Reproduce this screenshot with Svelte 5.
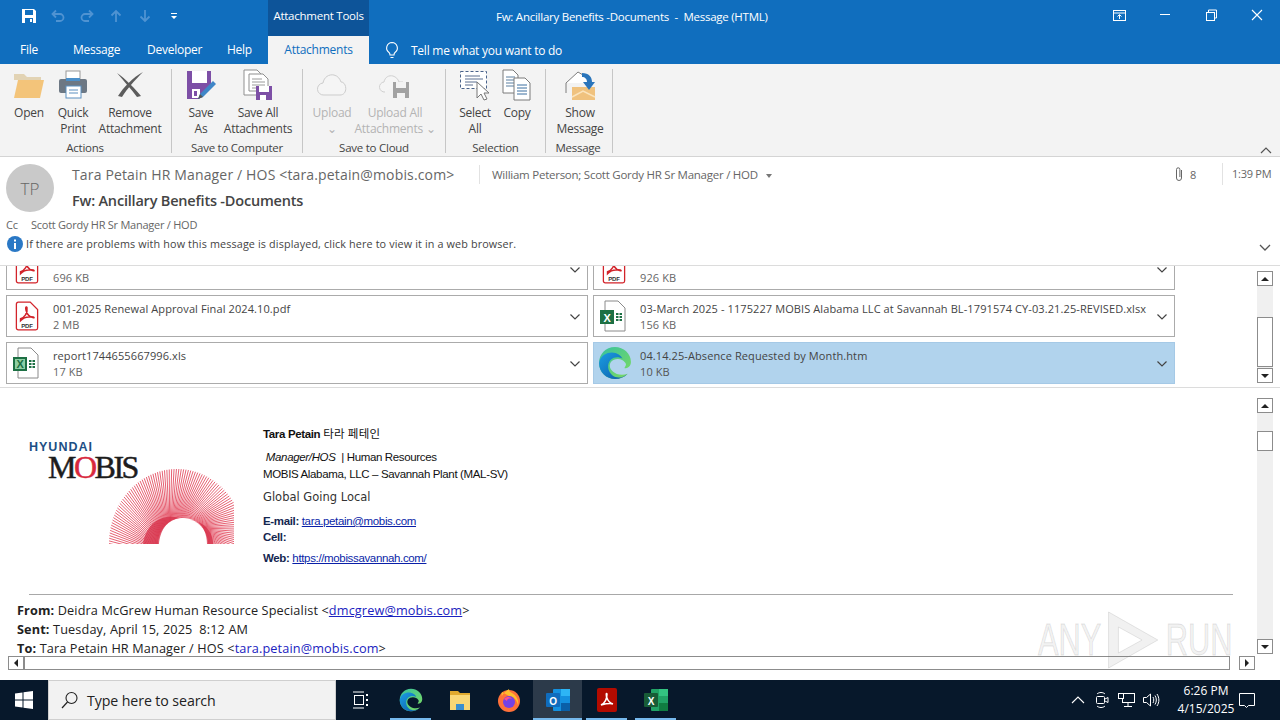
<script>
  const groups = [
    { caption: 'Actions', width: 172, pad: 7, items: [
      { icon: 'open', w: 44, label: ['Open'] },
      { icon: 'print', w: 44, label: ['Quick', 'Print'] },
      { icon: 'remove', w: 70, label: ['Remove', 'Attachment'] },
    ]},
    { caption: 'Save to Computer', width: 131, pad: 8, items: [
      { icon: 'saveas', w: 42, label: ['Save', 'As'] },
      { icon: 'saveall', w: 72, label: ['Save All', 'Attachments'] },
    ]},
    { caption: 'Save to Cloud', width: 143, pad: 8, items: [
      { icon: 'upload', w: 42, label: ['Upload', '⌄'], off: true },
      { icon: 'uploadall', w: 84, label: ['Upload All', 'Attachments ⌄'], off: true },
    ]},
    { caption: 'Selection', width: 100, pad: 8, items: [
      { icon: 'select', w: 42, label: ['Select', 'All'] },
      { icon: 'copy', w: 42, label: ['Copy'] },
    ]},
    { caption: 'Message', width: 67, pad: 6, items: [
      { icon: 'show', w: 56, label: ['Show', 'Message'] },
    ]},
  ];

  const files = [
    { icon: 'pdf', name: '', size: '696 KB' },
    { icon: 'pdf', name: '', size: '926 KB' },
    { icon: 'pdf', name: '001-2025 Renewal Approval Final 2024.10.pdf', size: '2 MB' },
    { icon: 'xlsx', name: '03-March 2025 - 1175227 MOBIS Alabama LLC at Savannah BL-1791574 CY-03.21.25-REVISED.xlsx', size: '156 KB' },
    { icon: 'xls', name: 'report1744655667996.xls', size: '17 KB' },
    { icon: 'edge', name: '04.14.25-Absence Requested by Month.htm', size: '10 KB', selected: true },
  ];

  // fan of thin lines for the logo swirl
  const swirl = Array.from({ length: 112 }, (_, i) => {
    const a = Math.PI - 0.1 + (i / 111) * Math.PI * 1.25;
    const twist = 0.45;
    return {
      x1: 77 + 25 * Math.cos(a - twist),
      y1: 78 + 26 * Math.sin(a - twist),
      x2: 71 + 68 * Math.cos(a),
      y2: 78 + 75 * Math.sin(a),
    };
  });
</script>

{#snippet edge(size)}
  <svg width={size} height={size} viewBox="0 0 32 32">
    <defs>
      <linearGradient id="eg{size}" x1="0" y1="0" x2="1" y2="1"><stop offset="0" stop-color="#35c1a0"/><stop offset="1" stop-color="#7fdc5e"/></linearGradient>
      <linearGradient id="eb{size}" x1="0" y1="0" x2="1" y2="1"><stop offset="0" stop-color="#1b9de2"/><stop offset="1" stop-color="#0c5aa8"/></linearGradient>
    </defs>
    <path d="M16 1C7 1 1 8 1 16c0 9 7 15 15 15 5 0 9-2 12-5-5 2-11 1-14-2-4-3-4-9 1-11 4-2 9 0 10 2 3 3 0 4 0 6 3 0 6-2 6-6C31 7 24 1 16 1z" fill="url(#eg{size})"/>
    <path d="M1 16C2 9 8 6 13 6c5 0 9 3 10 6-3-2-8-2-11 1-4 4-3 11 2 15 3 2 8 3 14-2-3 3-7 5-12 5C8 31 1 25 1 16z" fill="url(#eb{size})"/>
  </svg>
{/snippet}

{#snippet ricon(name)}
  <svg class="ricon" viewBox="0 0 32 32" width="32" height="32">
    {#if name === 'open'}
      <path d="M1 5h10l3 3h14v3H1z" fill="#e2d3b4"/>
      <path d="M5 11h26l-4 18H1z" fill="#f3c47a"/>
    {:else if name === 'print'}
      <rect x="9" y="2" width="14" height="10" fill="#fff" stroke="#9a9a9a"/>
      <rect x="2" y="10" width="28" height="14" rx="2" fill="#6d7884"/>
      <rect x="9" y="17" width="15" height="12" fill="#fff" stroke="#5b8fc0"/>
      <path d="M12 21h9M12 24h9" stroke="#5b8fc0"/>
      <rect x="9" y="9" width="14" height="3" fill="#4d90c9"/>
    {:else if name === 'remove'}
      <path d="M3 4c8 5 20 18 24 23l-4 1C17 20 9 11 3 4z" fill="#5c5c5c"/>
      <path d="M29 3C19 8 9 19 4 27l4 1C13 20 21 11 29 3z" fill="#5c5c5c"/>
    {:else if name === 'saveas'}
      <path d="M2 2h24v17l-12 11H2z" fill="#7d4fa6"/>
      <rect x="7" y="2" width="15" height="12" fill="#fff"/>
      <rect x="7" y="20" width="8" height="9" fill="#fff"/>
      <rect x="9" y="22" width="3" height="5" fill="#7d4fa6"/>
      <path d="M13 30l2-5 13-13 3 3-13 13z" fill="#3f86c7"/>
      <path d="M13 30l2-5 3 3z" fill="#555"/>
    {:else if name === 'saveall'}
      <path d="M2 1h13l5 5v20H2z" fill="#fff" stroke="#8f8f8f"/>
      <path d="M7 5h14l5 5v12H7z" fill="#fff" stroke="#8f8f8f"/>
      <path d="M10 10h10M10 13h13M10 16h13M10 19h6" stroke="#9a9a9a"/>
      <rect x="14" y="17" width="16" height="14" fill="#7d4fa6"/>
      <rect x="17" y="17" width="10" height="6" fill="#fff"/>
      <rect x="18" y="26" width="6" height="5" fill="#fff"/>
    {:else if name === 'upload'}
      <path d="M8 26a6 6 0 0 1-1-12c1-6 6-9 11-8 4 1 6 4 7 7 6 0 7 13-1 13z" fill="#f6f6f6" stroke="#c9c9c9"/>
    {:else if name === 'uploadall'}
      <path d="M6 23a5 5 0 0 1-1-10c1-5 5-7 9-6 3 1 5 3 6 6h4" fill="#f6f6f6" stroke="#cdcdcd"/>
      <rect x="14" y="13" width="16" height="16" fill="#9a9a9a"/>
      <rect x="17" y="13" width="10" height="6" fill="#f3f3f3"/>
      <rect x="18" y="24" width="8" height="5" fill="#f3f3f3"/>
    {:else if name === 'select'}
      <rect x="1.5" y="2.5" width="26" height="17" fill="#fff" stroke="#49628a" stroke-dasharray="3 2"/>
      <path d="M6 7h15M6 10h18M6 13h12M6 16h8" stroke="#5a6f90"/>
      <path d="M18 13l0 16 4-4 3 6 3-1-3-6 5 0z" fill="#fff" stroke="#777"/>
    {:else if name === 'copy'}
      <path d="M2 1h10l5 5v18H2z" fill="#fff" stroke="#7a7a7a"/>
      <path d="M5 8h9M5 11h9M5 14h9M5 17h9" stroke="#5a7fa0"/>
      <path d="M13 9h11l5 5v17H13z" fill="#fff" stroke="#7a7a7a"/>
      <path d="M16 16h10M16 19h10M16 22h10M16 25h10" stroke="#3a6ea0"/>
    {:else if name === 'show'}
      <path d="M2 14L14 3l10 6v5" fill="#fff" stroke="#7d7d7d"/>
      <path d="M2 14v10" stroke="#7d7d7d"/>
      <path d="M8 18h23v13H8z" fill="#f0c27e"/>
      <path d="M8 28l11-6 12 6" fill="none" stroke="#fbe4bd" stroke-width="1.5"/>
      <path d="M18 4c7 0 10 4 10 9h3l-6 8-6-8h4c0-3-2-5-5-5z" fill="#2a75bb"/>
    {/if}
  </svg>
{/snippet}

{#snippet fileicon(name)}
  {#if name === 'pdf'}
    <svg viewBox="0 0 26 32" width="24" height="30">
      <path d="M1.5 3a2 2 0 0 1 2-2h13l8 8v20a2 2 0 0 1-2 2h-19a2 2 0 0 1-2-2z" fill="#fff" stroke="#d2232a" stroke-width="1.4"/>
      <path d="M6 19c4-1 8-6 7-12-1-2-2 0-1 3 1 4 4 7 8 8 2 0-1-2-5-1-4 0-8 3-9 4z" fill="none" stroke="#d2232a" stroke-width="1.6"/>
      <text x="13" y="28.5" class="pdftxt">PDF</text>
    </svg>
  {:else if name === 'xlsx'}
    <svg viewBox="0 0 28 32" width="28" height="32">
      <path d="M6 1h13l7 7v23H6z" fill="#fff" stroke="#8a8a8a"/>
      <rect x="1" y="10" width="14" height="14" fill="#1d7044"/>
      <text x="8" y="21.5" class="xltxt">X</text>
      <path d="M17 14h6M17 17h6M17 20h6" stroke="#1d7044" stroke-width="2" stroke-dasharray="2.5 1"/>
    </svg>
  {:else if name === 'xls'}
    <svg viewBox="0 0 28 32" width="28" height="32">
      <path d="M6 1h13l7 7v23H6z" fill="#fff" stroke="#8a8a8a"/>
      <rect x="1" y="10" width="14" height="14" fill="#1d7044"/>
      <rect x="3" y="12" width="10" height="10" fill="#8ed0a5"/>
      <text x="8" y="21" class="xltxt dark">X</text>
      <path d="M17 14h6M17 17h6M17 20h6" stroke="#1d7044" stroke-width="2" stroke-dasharray="2.5 1"/>
    </svg>
  {:else}
    {@render edge(34)}
  {/if}
{/snippet}

<div class="window">
  <div class="chrome">
    <div class="titlerow">
      <div class="qat">
        <svg width="16" height="16" viewBox="0 0 16 16" class="qi"><path d="M1 1h12l2 2v12H1z" fill="#fff"/><rect x="4" y="2" width="8" height="5" fill="#106ebe"/><rect x="4" y="10" width="8" height="5" fill="#106ebe"/><rect x="9" y="11" width="2" height="3" fill="#fff"/></svg>
        <svg width="16" height="16" viewBox="0 0 16 16" class="qi"><path d="M3 6h7a3.500 3.500 0 0 1 0 7H6M6 2.500L2.500 6 6 9.500" fill="none" stroke="#4f93d2" stroke-width="1.800"/></svg>
        <svg width="16" height="16" viewBox="0 0 16 16" class="qi"><path d="M13 6H6a3.500 3.500 0 0 0 0 7h4M10 2.500L13.500 6 10 9.500" fill="none" stroke="#4f93d2" stroke-width="1.800"/></svg>
        <svg width="16" height="16" viewBox="0 0 16 16" class="qi"><path d="M8 14V3M3.500 7.500L8 3l4.500 4.500" fill="none" stroke="#4f93d2" stroke-width="1.800"/></svg>
        <svg width="16" height="16" viewBox="0 0 16 16" class="qi"><path d="M8 2v11M3.500 8.500L8 13l4.500-4.500" fill="none" stroke="#4f93d2" stroke-width="1.800"/></svg>
        <svg width="16" height="16" viewBox="0 0 16 16" class="qi"><path d="M5 5h6v1H5zM5 8h6l-3 3z" fill="#fff"/></svg>
      </div>
      <div class="context">Attachment Tools</div>
      <div class="wintitle">Fw: Ancillary Benefits -Documents &nbsp;-&nbsp; Message (HTML)</div>
      <div class="wincontrols">
        <svg width="46" height="32" viewBox="0 0 46 32"><rect x="17.500" y="10.500" width="12" height="10" fill="none" stroke="#fff"/><path d="M18 13h11" stroke="#fff"/><path d="M23.500 19v-4M21.500 16.500l2-2 2 2" stroke="#fff" fill="none"/></svg>
        <svg width="46" height="32" viewBox="0 0 46 32"><path d="M18 14.500h10" stroke="#fff"/></svg>
        <svg width="46" height="32" viewBox="0 0 46 32"><rect x="18.500" y="12.500" width="8" height="8" fill="none" stroke="#fff"/><path d="M20.500 12v-2h8v8h-2" fill="none" stroke="#fff"/></svg>
        <svg width="46" height="32" viewBox="0 0 46 32"><path d="M18 10l10 10M28 10L18 20" stroke="#fff" stroke-width="1.100"/></svg>
      </div>
    </div>
    <div class="tabrow">
      <span class="tab t-file">File</span>
      <span class="tab t-msg">Message</span>
      <span class="tab t-dev">Developer</span>
      <span class="tab t-help">Help</span>
      <span class="tab active">Attachments</span>
      <svg class="bulb" width="16" height="18" viewBox="0 0 16 18"><path d="M8 1.500a5.500 5.500 0 0 0-3 10c.700.600 1 1.500 1 2.500h4c0-1 .300-1.900 1-2.500a5.500 5.500 0 0 0-3-10zM6.500 16.500h3" fill="none" stroke="#fff" stroke-width="1.100"/></svg>
      <span class="tellme">Tell me what you want to do</span>
    </div>
  </div>

  <div class="ribbon">
    {#each groups as g}
      <div class="group" style="width:{g.width}px;padding-left:{g.pad}px">
        <div class="buttons">
          {#each g.items as it}
            <div class="rbtn" class:off={it.off} style="width:{it.w}px">
              {@render ricon(it.icon)}
              {#each it.label as l}<span>{l}</span>{/each}
            </div>
          {/each}
        </div>
        <div class="caption">{g.caption}</div>
      </div>
    {/each}
    <svg class="collapse" width="12" height="8" viewBox="0 0 12 8"><path d="M1 7l5-5 5 5" fill="none" stroke="#555" stroke-width="1.200"/></svg>
  </div>

  <div class="header">
    <div class="hrow">
      <div class="avatar">TP</div>
      <div class="hmain">
        <div class="hline">
          <span class="sender">Tara Petain HR Manager / HOS &lt;tara.petain@mobis.com&gt;</span>
          <span class="recips">William Peterson; Scott Gordy HR Sr Manager / HOD <i class="caret"></i></span>
          <span class="clip">
            <svg width="10" height="16" viewBox="0 0 10 16"><path d="M7.500 4v8a2.500 2.500 0 0 1-5 0V3.500a1.700 1.700 0 0 1 3.400 0V11" fill="none" stroke="#666" stroke-width="1"/></svg>
            8
          </span>
          <span class="time">1:39 PM</span>
        </div>
        <div class="subject">Fw: Ancillary Benefits -Documents</div>
      </div>
    </div>
    <div class="cc"><span>Cc</span><span>Scott Gordy HR Sr Manager / HOD</span></div>
    <div class="info">
      <svg width="16" height="16" viewBox="0 0 16 16"><circle cx="8" cy="8" r="8" fill="#2a78c5"/><rect x="7" y="7" width="2" height="6" fill="#fff"/><rect x="7" y="3.500" width="2" height="2" fill="#fff"/></svg>
      <span>If there are problems with how this message is displayed, click here to view it in a web browser.</span>
      <svg class="more" width="12" height="8" viewBox="0 0 12 8"><path d="M1 1l5 5 5-5" fill="none" stroke="#555" stroke-width="1.300"/></svg>
    </div>
  </div>

  <div class="attach">
    <div class="filegrid">
      {#each files as f}
        <div class="att" class:selected={f.selected}>
          <div class="fi {f.icon}">{@render fileicon(f.icon)}</div>
          <div class="ft">
            <div class="fname">{f.name || '\u00a0'}</div>
            <div class="fsize">{f.size}</div>
          </div>
          <svg class="chev" width="10" height="6" viewBox="0 0 10 6"><path d="M.5.500L5 5l4.500-4.500" fill="none" stroke="#444" stroke-width="1.200"/></svg>
        </div>
      {/each}
    </div>
    <div class="vbar small">
      <div class="sbtn"><i class="up"></i></div>
      <div class="track"><div class="thumb th1"></div></div>
      <div class="sbtn"><i class="down"></i></div>
    </div>
  </div>

  <div class="body">
    <div class="bodyrow">
      <div class="mail">
        <div class="sig">
          <div class="logo">
            <div class="hy">HYUNDAI</div>
            <div class="mo">M<span class="o">O</span>BIS</div>
            <svg class="swirl" width="128" height="78" viewBox="0 0 128 78">
              {#each swirl as s}
                <line x1={s.x1} y1={s.y1} x2={s.x2} y2={s.y2} stroke="#e0394f" stroke-width="0.800"/>
              {/each}
              <path d="M37 78C40 58 55 47 73 52 60 54 54 66 53 78z" fill="#d62f48" opacity=".75"/>
              <path d="M101 78c0-10-4-18-9-22 9 3 15 12 15 22z" fill="#d62f48" opacity=".75"/>
            </svg>
          </div>
          <div class="sigtext">
            <div class="n"><b>Tara Petain</b> <span class="ko">타라 페테인</span></div>
            <div class="r"><em>&nbsp;Manager/HOS</em> &nbsp;| Human Resources</div>
            <div class="c">MOBIS Alabama, LLC – Savannah Plant (MAL-SV)</div>
            <div class="g">Global Going Local</div>
            <div class="l first"><b>E-mail:</b> <u>tara.petain@mobis.com</u></div>
            <div class="l"><b>Cell:</b></div>
            <div class="l web"><b>Web:</b> <u>https://mobissavannah.com/</u></div>
          </div>
        </div>
        <hr />
        <div class="quoted">
          <div><b>From:</b> Deidra McGrew Human Resource Specialist &lt;<u>dmcgrew@mobis.com</u>&gt;</div>
          <div><b>Sent:</b> Tuesday, April 15, 2025 &nbsp;8:12 AM</div>
          <div><b>To:</b> Tara Petain HR Manager / HOS &lt;<u class="plain">tara.petain@mobis.com</u>&gt;</div>
        </div>
      </div>
      <div class="vbar big">
        <div class="sbtn"><i class="up"></i></div>
        <div class="track"><div class="thumb th2"></div></div>
        <div class="sbtn"><i class="down"></i></div>
      </div>
    </div>
    <div class="hbar">
      <div class="sbtn"><i class="left"></i></div>
      <div class="hthumb"></div>
      <div class="sbtn"><i class="right"></i></div>
    </div>
  </div>

  <div class="taskbar">
    <div class="start">
      <svg width="18" height="18" viewBox="0 0 18 18"><path d="M0 2.500l7.500-1v7H0zM8.500 1.300L18 0v8.500H8.500zM0 9.500h7.500v7l-7.500-1zM8.500 9.500H18V18l-9.500-1.300z" fill="#fff"/></svg>
    </div>
    <div class="search">
      <svg width="18" height="18" viewBox="0 0 18 18"><circle cx="10.500" cy="7" r="5.500" fill="none" stroke="#222" stroke-width="1.100"/><path d="M6.500 11L1 17" stroke="#222" stroke-width="1.200"/></svg>
      <span>Type here to search</span>
    </div>
    <div class="tasks">
      <div class="task tv">
        <svg width="18" height="18" viewBox="0 0 18 18"><path d="M1 1h11M1 17h11" stroke="#fff"/><rect x="2.500" y="4.500" width="9" height="9" fill="none" stroke="#fff"/><path d="M15 3v2M15 8v2M15 13v2" stroke="#fff" stroke-width="2"/></svg>
      </div>
      <div class="task run">{@render edge(24)}</div>
      <div class="task">
        <svg width="24" height="24" viewBox="0 0 24 24"><path d="M2 3h8l2 2h10v4H2z" fill="#e0a92e"/><rect x="2" y="7" width="20" height="15" fill="#f9d776"/><rect x="8" y="16" width="8" height="6" fill="#3b8fd0"/></svg>
      </div>
      <div class="task">
        <svg width="26" height="26" viewBox="0 0 26 26"><circle cx="13" cy="14" r="11" fill="#ff7139"/><path d="M6 5c-1 3 0 4 0 4 2-4 6-6 7-7 0 2 1 3 3 4 5 3 7 8 6 12-2-8-7-9-9-9" fill="#ffbd2e"/><circle cx="13" cy="15" r="6" fill="#7542e5"/><path d="M8 12c3-3 7-2 8 0-3-1-5 0-5 2" fill="#ff4f8b"/></svg>
      </div>
      <div class="task run cur">
        <svg width="26" height="26" viewBox="0 0 26 26"><rect x="8" y="2" width="17" height="22" rx="1" fill="#1490df"/><rect x="16" y="2" width="9" height="7" fill="#2db5f5"/><rect x="16" y="16" width="9" height="8" fill="#0a5fa8"/><rect x="1" y="6" width="14" height="14" rx="1" fill="#0f6cbd"/><text x="8" y="17.500" class="otxt">O</text></svg>
      </div>
      <div class="task run">
        <svg width="24" height="26" viewBox="0 0 24 26"><rect x="2" y="1" width="20" height="24" rx="2" fill="#b30b00"/><path d="M6 18c4-2 6-6 6-11-1-2-1 2 0 4 1 3 3 5 6 6-3-1-8 0-12 1z" fill="none" stroke="#fff" stroke-width="1.500"/></svg>
      </div>
      <div class="task run">
        <svg width="26" height="26" viewBox="0 0 26 26"><rect x="8" y="2" width="17" height="22" rx="1" fill="#21a366"/><rect x="16" y="2" width="9" height="7" fill="#33c481"/><rect x="16" y="16" width="9" height="8" fill="#107c41"/><rect x="1" y="6" width="14" height="14" rx="1" fill="#185c37"/><text x="8" y="17.500" class="otxt">X</text></svg>
      </div>
    </div>
    <div class="tray">
      <svg width="14" height="8" viewBox="0 0 14 8" class="t-chev"><path d="M1 7l6-6 6 6" fill="none" stroke="#fff" stroke-width="1.100"/></svg>
      <svg width="16" height="18" viewBox="0 0 16 18" class="t-ic"><rect x="2.500" y="5.500" width="8" height="7" rx="1" fill="none" stroke="#fff"/><path d="M11 8l3-1.500v5L11 10M3 3c2-2 6-2 8 0M3 15c2 2 6 2 8 0" fill="none" stroke="#fff"/></svg>
      <svg width="18" height="16" viewBox="0 0 18 16" class="t-ic"><rect x="5.500" y="1.500" width="12" height="9" fill="none" stroke="#fff"/><rect x="1.500" y="1.500" width="5" height="5" fill="#07182b" stroke="#fff"/><path d="M11 11v3M7 14.500h8" stroke="#fff"/></svg>
      <svg width="18" height="16" viewBox="0 0 18 16" class="t-ic"><path d="M1.500 5.500h3l4-3.500v12l-4-3.500h-3z" fill="none" stroke="#fff"/><path d="M11 5c1 2 1 4 0 6M13 3.500c1.800 3 1.800 6 0 9M15 2c2.500 4 2.500 8 0 12" fill="none" stroke="#fff"/></svg>
      <div class="clock"><span>6:26 PM</span><span>4/15/2025</span></div>
      <svg width="18" height="18" viewBox="0 0 18 18" class="note"><path d="M2.500 2.500h15v12h-6l-2 2-2-2h-5z" fill="none" stroke="#fff"/></svg>
    </div>
  </div>

  <div class="wm">
    <span>ANY</span>
    <svg width="76" height="62" viewBox="4 0 54 62" preserveAspectRatio="none"><path d="M6 3l50 28L6 59zM16 18v26l24-13z" fill="rgba(120,120,120,.1)" stroke="rgba(120,120,120,.18)"/></svg>
    <span>RUN</span>
  </div>
</div>

<style>
  :global(body) { margin: 0; background: #fff; overflow: hidden; }
  .window {
    position: relative;
    width: 1280px;
    height: 720px;
    display: flex;
    flex-direction: column;
    overflow: hidden;
    font-family: "Open Sans", "Liberation Sans", sans-serif;
    font-size: 12px;
    letter-spacing: -0.25px;
    color: #333;
  }

  /* title bar and tabs */
  .chrome { background: #106ebe; color: #fff; height: 64px; flex: none; }
  .titlerow { display: flex; height: 36px; }
  .qat { width: 268px; display: flex; align-items: center; padding: 0 0 4px 21px; box-sizing: border-box; gap: 13px; }
  .context { width: 101px; background: #0d5499; font-size: 11.5px; text-align: center; line-height: 32px; }
  .wintitle { margin-left: 127px; font-size: 11.5px; line-height: 34px; white-space: nowrap; }
  .wincontrols { margin-left: auto; display: flex; margin-right: 0; height: 32px; }
  .tabrow { display: flex; align-items: center; height: 28px; font-size: 12px; }
  .tab { line-height: 28px; white-space: nowrap; }
  .t-file { margin-left: 20px; width: 53px; }
  .t-msg { width: 74px; }
  .t-dev { width: 80px; }
  .t-help { width: 41px; }
  .active { background: #f3f3f3; color: #106ebe; width: 101px; text-align: center; }
  .bulb { margin-left: 15px; }
  .tellme { margin-left: 11px; }

  /* ribbon */
  .ribbon {
    position: relative;
    display: flex;
    height: 93px;
    flex: none;
    background: #f3f3f3;
    border-bottom: 1px solid #d4d4d4;
    box-sizing: border-box;
    padding-top: 5px;
  }
  .group {
    box-sizing: border-box;
    height: 84px;
    flex: none;
    border-right: 1px solid #c6c6c6;
    display: flex;
    flex-direction: column;
    color: #444;
  }
  .buttons { display: flex; height: 72px; flex: none; }
  .rbtn { display: flex; flex-direction: column; align-items: center; line-height: 16px; white-space: nowrap; }
  .rbtn.off { color: #b4b4b4; }
  .rbtn.off .ricon { opacity: .9; }
  .ricon { margin-bottom: 4px; flex: none; }
  .caption { flex: none; text-align: center; font-size: 11.5px; line-height: 12px; margin-top: 1px; margin-left: -8px; white-space: nowrap; }
  .collapse { position: absolute; right: 8px; bottom: 2px; }

  /* message header */
  .header { height: 109px; flex: none; box-sizing: border-box; border-bottom: 1px solid #dcdcdc; background: #fff; }
  .hrow { display: flex; height: 61px; padding: 8px 0 0 6px; box-sizing: border-box; }
  .avatar {
    width: 48px; height: 48px; border-radius: 50%;
    background: #c9c9c9; color: #666; font-size: 17px; font-weight: 300;
    display: flex; align-items: center; justify-content: center;
    flex: none; letter-spacing: 0; margin-top: -1px;
  }
  .hmain { margin-left: 18px; flex: 1; }
  .hline { display: flex; align-items: center; height: 22px; margin-top: -2px; }
  .sender { font-size: 14px; color: #666; width: 408px; box-sizing: border-box; border-right: 1px solid #e2e2e2; white-space: nowrap; letter-spacing: 0.15px; }
  .recips { font-size: 11.5px; color: #666; width: 679px; margin-left: 12px; white-space: nowrap; }
  .caret { display: inline-block; border: 3px solid transparent; border-top: 4px solid #777; margin: 0 0 -2px 5px; }
  .clip { display: flex; align-items: center; gap: 6px; width: 51px; color: #666; font-size: 11px; box-sizing: border-box; padding-left: 3px; }
  .time { color: #666; font-size: 11px; border-left: 1px solid #e2e2e2; padding-left: 9px; line-height: 22px; }
  .subject { font-size: 14.5px; font-weight: 600; color: #444; margin-top: 5px; line-height: 22px; letter-spacing: -0.2px; }
  .cc { display: flex; gap: 11px; padding-left: 6px; font-size: 11px; color: #666; line-height: 16px; margin-top: -1px; }
  .cc span:first-child { width: 14px; }
  .info { display: flex; align-items: center; padding: 2px 0 0 7px; gap: 3px; font-size: 10.800px; color: #444; letter-spacing: 0.13px; position: relative; line-height: 16px; }
  .more { margin-left: auto; margin-right: 9px; margin-top: 9px; }

  /* attachments */
  .attach { height: 122px; flex: none; display: flex; overflow: hidden; border-bottom: 1px solid #dcdcdc; box-sizing: border-box; }
  .filegrid {
    display: grid;
    grid-template-columns: 582px 582px;
    grid-auto-rows: 42px;
    gap: 5px;
    margin-top: -18px;
    padding-left: 6px;
    height: 136px;
  }
  .att {
    display: flex;
    align-items: center;
    box-sizing: border-box;
    border: 1px solid #ababab;
    background: #fff;
    position: relative;
  }
  .att.selected { background: #b1d3ed; border-color: #a5c9e6; }
  .fi { width: 46px; display: flex; box-sizing: border-box; flex: none; }
  .fi.pdf { padding-left: 8px; }
  .fi.xlsx, .fi.xls { padding-left: 5px; }
  .fi.edge { padding-left: 4px; }
  .ft { line-height: 16px; font-size: 11px; color: #444; white-space: nowrap; letter-spacing: 0.1px; padding-top: 2px; }
  .fsize { color: #666; }
  .selected .fsize { color: #555; }
  .chev { position: absolute; right: 7px; top: 18px; }
  .pdftxt { font: bold 6.5px "Liberation Sans", sans-serif; text-anchor: middle; fill: #333; }
  .xltxt { font: bold 11px "Liberation Sans", sans-serif; text-anchor: middle; fill: #fff; }
  .xltxt.dark { fill: #1d7044; }
  .otxt { font: bold 10px "Liberation Sans", sans-serif; text-anchor: middle; fill: #fff; }

  /* scrollbars */
  .vbar { width: 16px; display: flex; flex-direction: column; flex: none; background: #f0f0f0; }
  .small { margin: 5px 7px 5px auto; height: 112px; }
  .big { height: 256px; margin: 10px 7px 0 0; }
  .track { flex: 1; position: relative; }
  .sbtn {
    width: 16px; height: 15px; box-sizing: border-box; flex: none;
    background: #fff; border: 1px solid #8c8c8c;
    display: flex; align-items: center; justify-content: center;
  }
  .thumb { position: absolute; left: 0; right: 0; box-sizing: border-box; background: #fff; border: 1px solid #8c8c8c; }
  .th1 { top: 31px; height: 50px; }
  .th2 { top: 18px; height: 20px; }
  i.up, i.down, i.left, i.right { display: block; width: 0; height: 0; border: 4px solid transparent; }
  i.up { border-bottom: 4px solid #222; margin-top: -4px; }
  i.down { border-top: 4px solid #222; margin-bottom: -4px; }
  i.left { border-right: 4px solid #222; margin-left: -4px; }
  i.right { border-left: 4px solid #222; margin-right: -4px; }

  /* mail body */
  .body { height: 284px; flex: none; display: flex; flex-direction: column; }
  .bodyrow { display: flex; height: 268px; justify-content: space-between; }
  .mail { width: 1250px; overflow: hidden; }
  .sig { display: flex; height: 206px; padding-top: 36px; box-sizing: border-box; }
  .logo { width: 263px; position: relative; flex: none; }
  .hy { position: absolute; left: 29px; top: 17px; font: 700 12.500px/12px "Liberation Sans", sans-serif; color: #1d4f85; letter-spacing: 1px; }
  .mo { position: absolute; left: 48px; top: 31px; font: 400 32px/24px "Liberation Serif", serif; color: #1d1d1d; letter-spacing: -2.500px; -webkit-text-stroke: .5px #1d1d1d; }
  .mo .o { color: #d8283d; -webkit-text-stroke: .5px #d8283d; }
  .swirl { position: absolute; left: 106px; top: 42px; }
  .sigtext { font-family: "Liberation Sans", sans-serif; font-size: 11.500px; color: #111; letter-spacing: -0.35px; }
  .n { line-height: 18px; }
  .ko { font-family: "Noto Sans CJK KR", sans-serif; letter-spacing: 0.300px; }
  .r { margin-top: 6px; line-height: 17px; }
  .c { line-height: 16px; }
  .g { margin-top: 6px; line-height: 18px; font-family: "DejaVu Sans", sans-serif; font-size: 11.500px; letter-spacing: 0; color: #333; }
  .l { line-height: 16px; color: #14264f; }
  .l.first { margin-top: 7px; }
  .l u { color: #0a1fa8; }
  .web { margin-top: 5px; }
  hr { margin: 0 0 0 29px; width: 1204px; border: 0; border-top: 1px solid #a8a8a8; height: 0; }
  .quoted { padding: 6px 0 0 17px; font-family: "Open Sans", sans-serif; font-size: 12.700px; line-height: 19px; color: #222; letter-spacing: 0.13px; }
  .quoted u { color: #1a22c0; }
  .quoted u.plain { text-decoration: none; }
  .hbar {
    display: flex;
    margin: 0 25px 0 8px;
    height: 14px;
  }
  .hbar .sbtn { height: 14px; }
  .hthumb { width: 1207px; box-sizing: border-box; border: 1px solid #8c8c8c; background: #fff; margin-right: 9px; }

  /* taskbar */
  .taskbar { margin-top: auto; height: 40px; flex: none; background: #07182b; display: flex; color: #fff; }
  .start { width: 48px; display: flex; align-items: center; justify-content: center; }
  .search { width: 288px; box-sizing: border-box; background: #f2f2f2; border: 1px solid #cfcfcf; color: #222; display: flex; align-items: center; padding-left: 12px; gap: 8px; font-size: 14.200px; letter-spacing: -0.1px; }
  .tasks { display: flex; padding-left: 0; }
  .task { width: 49px; height: 40px; display: flex; align-items: center; justify-content: center; position: relative; box-sizing: border-box; }
  .tv { margin-right: 1px; }
  .run::after { content: ""; position: absolute; left: 4px; right: 4px; bottom: 0; height: 2px; background: #76b9ed; }
  .cur { background: #2c3a4a; }
  .cur::after { left: 0; right: 0; }
  .tray { margin-left: auto; display: flex; align-items: center; }
  .t-chev { margin-right: 9px; }
  .t-ic { margin-right: 7px; }
  .clock { display: flex; flex-direction: column; align-items: center; width: 58px; margin: 0 2px 0 10px; font-size: 12px; line-height: 18px; letter-spacing: 0; }
  .note { margin: 0 25px 0 0; }

  /* watermark */
  .wm {
    position: absolute;
    left: 1038px;
    top: 609px;
    display: flex;
    align-items: center;
    gap: 8px;
    font: 400 44px/62px "Liberation Sans", sans-serif;
    letter-spacing: 0;
    color: rgba(120,120,120,.10);
    -webkit-text-stroke: 1px rgba(120,120,120,.2);
    transform: scaleX(.7);
    transform-origin: left;
    pointer-events: none;
  }
</style>
